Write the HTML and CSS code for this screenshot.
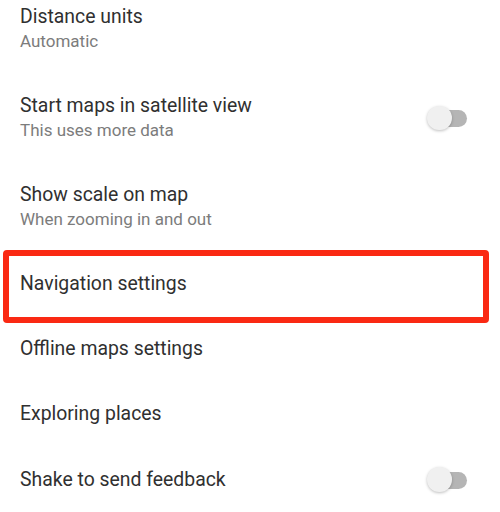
FILE: index.html
```html
<!DOCTYPE html>
<html lang="en">
<head>
    <meta charset="UTF-8">
    <meta name="viewport" content="width=device-width, initial-scale=1.0">
    <title>Settings</title>
    <link rel="stylesheet" href="styles.css">
</head>
<body>

    <div class="settings-list">
        <div class="setting-row">
            <div class="setting-text">
                <div class="setting-title">Distance units</div>
                <div class="setting-sub">Automatic</div>
            </div>
        </div>

        <div class="setting-row">
            <div class="setting-text">
                <div class="setting-title">Start maps in satellite view</div>
                <div class="setting-sub">This uses more data</div>
            </div>
            <span class="switch"></span>
        </div>

        <div class="setting-row">
            <div class="setting-text">
                <div class="setting-title">Show scale on map</div>
                <div class="setting-sub">When zooming in and out</div>
            </div>
        </div>

        <div class="setting-row highlighted">
            <div class="setting-text">
                <div class="setting-title">Navigation settings</div>
            </div>
        </div>

        <div class="setting-row">
            <div class="setting-text">
                <div class="setting-title">Offline maps settings</div>
            </div>
        </div>

        <div class="setting-row">
            <div class="setting-text">
                <div class="setting-title">Exploring places</div>
            </div>
        </div>

        <div class="setting-row">
            <div class="setting-text">
                <div class="setting-title">Shake to send feedback</div>
            </div>
            <span class="switch"></span>
        </div>
    </div>

</body>
</html>
```

FILE: styles.css
```css
body {
    margin: 0;
    background-color: #fff;
    font-family: Roboto, "Liberation Sans", sans-serif;
    overflow: hidden;
}

.settings-list {
    margin-top: -15.4px;
}

.setting-row {
    position: relative;
    display: flex;
    justify-content: space-between;
    align-items: center;
    padding: 20.5px 33px 20.5px 20px;
}

.setting-title {
    font-size: 19.4px;
    line-height: 24px;
    color: #303030;
}

.setting-sub {
    font-size: 17px;
    line-height: 24px;
    color: #7c7c7c;
}

/* red box drawn over the navigation row */
.highlighted::after {
    content: "";
    position: absolute;
    left: 2.5px;
    top: -1.5px;
    width: 486px;
    height: 72.5px;
    box-sizing: border-box;
    border: 6px solid #fa2913;
    border-radius: 4px;
}

.switch {
    position: relative;
    width: 40px;
    height: 25px;
    flex-shrink: 0;
}

.switch::before {
    content: "";
    position: absolute;
    left: 4px;
    top: 4.5px;
    width: 36px;
    height: 17px;
    border-radius: 8.5px;
    background-color: #b5b5b5;
}

.switch::after {
    content: "";
    position: absolute;
    left: 0;
    top: 0;
    width: 24.5px;
    height: 24.5px;
    border-radius: 50%;
    background-color: #f0f0f0;
    box-shadow: 0 1px 3px rgba(0, 0, 0, 0.25);
}
```
